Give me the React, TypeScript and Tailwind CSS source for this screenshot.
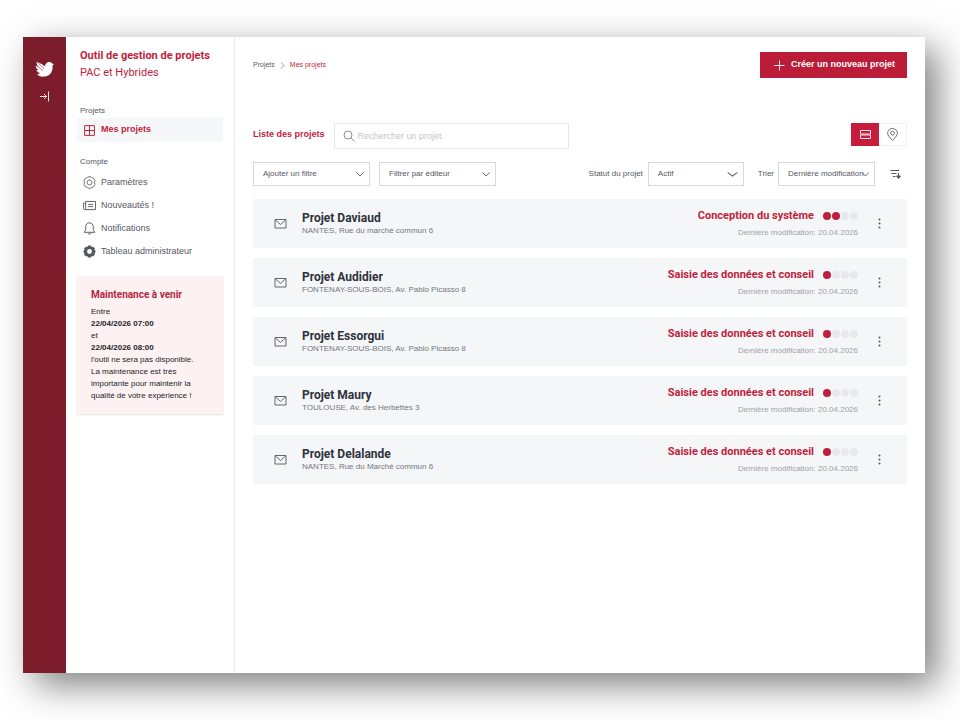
import { useState } from "react";

const projects = [
  { name: "Projet Daviaud", address: "NANTES, Rue du marché commun 6", status: "Conception du système", step: 2 },
  { name: "Projet Audidier", address: "FONTENAY-SOUS-BOIS, Av. Pablo Picasso 8", status: "Saisie des données et conseil", step: 1 },
  { name: "Projet Essorgui", address: "FONTENAY-SOUS-BOIS, Av. Pablo Picasso 8", status: "Saisie des données et conseil", step: 1 },
  { name: "Projet Maury", address: "TOULOUSE, Av. des Herbettes 3", status: "Saisie des données et conseil", step: 1 },
  { name: "Projet Delalande", address: "NANTES, Rue du Marché commun 6", status: "Saisie des données et conseil", step: 1 },
];

const accountItems = [
  {
    title: "Paramètres",
    icon: (
      <svg className="size-[13px]" viewBox="0 0 24 24" fill="none" stroke="currentColor" strokeWidth="1.5" strokeLinejoin="round">
        <path d="M9 1.500h6l1.500 1.800 2.700.5 3 5-.8 2.200v2l.8 2.200-3 5-2.700.5L15 22.500H9l-1.500-1.800-2.700-.5-3-5 .8-2.200v-2l-.8-2.200 3-5 2.700-.5z" />
        <circle cx="12" cy="12" r="4.500" />
      </svg>
    ),
  },
  {
    title: "Nouveautés !",
    icon: (
      <svg className="size-[13px]" viewBox="0 0 24 24" fill="none" stroke="currentColor" strokeWidth="1.7">
        <path d="M5 4.500h18v15H3.500A2.500 2.500 0 0 1 1 17V7.500h4M5 4.500V17a1.500 2.500 0 0 1-1.500 2.500" />
        <path d="M9.500 10h9M9.500 14h9" />
      </svg>
    ),
  },
  {
    title: "Notifications",
    icon: (
      <svg className="size-[13px]" viewBox="0 0 24 24" fill="none" stroke="currentColor" strokeWidth="1.7" strokeLinejoin="round">
        <path d="M12 1.500c-4.500 0-7 3.300-7 7.500v5.500l-3 4.500h20l-3-4.500V9c0-4.200-2.500-7.500-7-7.500z" />
        <path d="M9 19.500c.3 2 1.500 3 3 3s2.700-1 3-3" />
      </svg>
    ),
  },
  {
    title: "Tableau administrateur",
    icon: (
      <svg className="size-[13px]" viewBox="0 0 24 24" fill="currentColor">
        <path
          fillRule="evenodd"
          d="M9 1h6l.8 2.600L18.500 3 22 6.500l-.8 2.500L23 10v4l-1.800 1 .8 2.500-3.500 3.500-2.700-.6L15 23H9l-.8-2.600-2.700.6L2 17.500l.8-2.500L1 14v-4l1.800-1L2 6.500 5.500 3l2.700.6zM12 7.500a4.500 4.500 0 1 0 0 9 4.500 4.500 0 0 0 0-9z"
        />
      </svg>
    ),
  },
];

export default function App() {
  return (
    <div className="flex min-h-screen bg-white pt-[37px] pr-[35px] pb-[47px] pl-[23px] font-['Liberation_Sans',Arial,sans-serif] text-[#55585f]">
      <div className="flex flex-1 bg-white shadow-[12px_12px_34px_rgba(0,0,0,0.5)]">
        <Rail />
        <Sidebar />
        <Main />
      </div>
    </div>
  );
}

function Rail() {
  return (
    <aside className="flex w-[43px] shrink-0 flex-col items-center bg-[#7d1d2b] pt-6 text-white">
      <svg className="h-4 w-[19px]" viewBox="0 0 38 32" fill="currentColor" aria-label="Accueil">
        <path d="M3 2c5 1 11 4 17 9 0-6 4-9 8-9 3 0 5 1 6 3l4 1-3 3c1 13-5 21-16 22-7 1-12-1-15-5 3 0 5-1 6-2-4-1-6-3-7-6l4 0C4 16 2 14 1 10l5 1C4 8 3 5 3 2z" />
        <path d="M5 3l13 12M4 10l12 9" stroke="#7d1d2b" strokeWidth="1.200" fill="none" />
      </svg>
      <button type="button" aria-label="Déplier le menu" className="mt-[14px]">
        <svg className="size-[11px]" viewBox="0 0 22 22" fill="none" stroke="currentColor" strokeWidth="1.800">
          <path d="M2 11h13M10 6l5 5-5 5M19 1v20" />
        </svg>
      </button>
    </aside>
  );
}

function Sidebar() {
  return (
    <nav className="w-[169px] shrink-0 border-r border-[#ececef] px-[11px] pt-[10px]">
      <div className="pl-[3px] font-[Roboto,sans-serif] text-[11px] leading-[17px] text-[#bf1e3c]">
        <p className="font-bold">Outil de gestion de projets</p>
        <p>PAC et Hybrides</p>
      </div>

      <p className="mt-6 pl-[3px] text-[8px] leading-3">Projets</p>
      <a href="#" className="mt-[1px] flex h-6 items-center gap-[5px] bg-[#f6f7f9] pl-[6px] text-[9px] font-bold text-[#bf1e3c]">
        <svg className="size-[13px]" viewBox="0 0 24 24" fill="none" stroke="currentColor" strokeWidth="1.800">
          <path d="M3 3h18v18H3zM12 3v18M3 12h18" />
        </svg>
        Mes projets
      </a>

      <p className="mt-[14px] pl-[3px] text-[8px] leading-3">Compte</p>
      <ul className="mt-[3px]">
        {accountItems.map((item) => (
          <li key={item.title}>
            <a href="#" className="flex h-[23px] items-center gap-[5px] pl-[6px] text-[9px]">
              {item.icon}
              {item.title}
            </a>
          </li>
        ))}
      </ul>

      <section className="mt-[13px] bg-[#fdf1f2] pt-3 pr-6 pb-3 pl-[14px] text-[8px] leading-3 text-[#23252b] shadow-[0_1px_2px_rgba(0,0,0,0.12)]">
        <h2 className="mb-1 font-[Roboto,sans-serif] text-[10px] leading-[14px] font-bold text-[#b5263f]">Maintenance à venir</h2>
        <p>Entre</p>
        <p className="font-bold">22/04/2026 07:00</p>
        <p>et</p>
        <p className="font-bold">22/04/2026 08:00</p>
        <p>l'outil ne sera pas disponible. La maintenance est très importante pour maintenir la qualité de votre expérience !</p>
      </section>
    </nav>
  );
}

function Main() {
  const [search, setSearch] = useState("");

  return (
    <main className="min-w-0 flex-1 px-[18px] pt-[15px]">
      <header className="flex items-center justify-between">
        <div className="flex items-center gap-1 text-[7px]">
          <a href="#">Projets</a>
          <svg className="size-[7px]" viewBox="0 0 14 14" fill="none" stroke="#8d9098" strokeWidth="1.800">
            <path d="M4 1l6 6-6 6" />
          </svg>
          <a href="#" className="text-[#bf1e3c]">Mes projets</a>
        </div>
        <button type="button" className="flex h-[26px] items-center gap-[6px] bg-[#bb1d39] pr-3 pl-[14px] text-[9px] font-bold text-white">
          <svg className="size-[11px]" viewBox="0 0 22 22" fill="none" stroke="currentColor" strokeWidth="1.800">
            <path d="M11 1v20M1 11h20" />
          </svg>
          Créer un nouveau projet
        </button>
      </header>

      <div className="mt-[45px] flex items-start">
        <h1 className="mr-[9px] text-[9px] leading-[23px] font-bold text-[#bf1e3c]">Liste des projets</h1>
        <label className="flex h-[26px] w-[235px] items-center gap-[3px] border border-[#e6e7ea] px-2 text-[#8d9098]">
          <svg className="size-3 shrink-0" viewBox="0 0 24 24" fill="none" stroke="currentColor" strokeWidth="2">
            <circle cx="10" cy="10" r="8" />
            <path d="M16 16l7 7" />
          </svg>
          <input
            type="text"
            aria-label="Rechercher un projet"
            placeholder="Rechercher un projet"
            value={search}
            onChange={(e) => setSearch(e.target.value)}
            className="h-full w-full min-w-0 text-[9px] outline-none placeholder:text-[#c3c5ca]"
          />
        </label>
        <div className="ml-auto flex h-[23px]">
          <button type="button" aria-label="Vue liste" className="grid w-7 place-items-center bg-[#c81c3d] text-white">
            <svg className="size-[11px]" viewBox="0 0 22 22" fill="none" stroke="currentColor" strokeWidth="1.800">
              <path d="M1 3h20v7H1zM1 12h20v7H1z" />
            </svg>
          </button>
          <button type="button" aria-label="Vue carte" className="grid w-7 place-items-center border border-l-0 border-[#eff0f2]">
            <svg className="size-[13px]" viewBox="0 0 24 24" fill="none" stroke="currentColor" strokeWidth="1.600">
              <path d="M12 23C6 17 3 13 3 9.500a9 8.500 0 0 1 18 0C21 13 18 17 12 23z" />
              <circle cx="12" cy="9.500" r="3.500" />
            </svg>
          </button>
        </div>
      </div>

      <div className="mt-[13px] flex items-center text-[8px]">
        <Select label="Ajouter un filtre" className="w-[117px]" />
        <Select label="Filtrer par éditeur" className="ml-[9px] w-[117px]" />
        <label htmlFor="statut" className="mr-[5px] ml-auto">Statut du projet</label>
        <Select id="statut" label="Actif" className="w-24" wide />
        <label htmlFor="tri" className="mr-1 ml-[14px]">Trier</label>
        <Select id="tri" label="Dernière modification" className="w-[97px]" tight />
        <button type="button" aria-label="Ordre de tri" className="mr-[6px] ml-[15px]">
          <svg className="size-[11px]" viewBox="0 0 22 22" fill="none" stroke="currentColor" strokeWidth="2">
            <path d="M1 3h17M3 9h10M6 15h5M17 8v10" />
            <path d="M13 14h8l-4 5z" fill="currentColor" />
          </svg>
        </button>
      </div>

      <ul className="mt-[13px] flex flex-col gap-[10px]">
        {projects.map((project) => (
          <ProjectRow key={project.name} {...project} />
        ))}
      </ul>
    </main>
  );
}

function Select({ id, label, className, wide, tight }: { id?: string; label: string; className: string; wide?: boolean; tight?: boolean }) {
  return (
    <div className={`relative ${className}`}>
      <select
        id={id}
        aria-label={id ? undefined : label}
        className={`block h-6 w-full appearance-none border border-[#d5d8dc] bg-white pl-[9px] ${tight ? "pr-0" : "pr-4"}`}
      >
        <option>{label}</option>
      </select>
      <svg
        className={`pointer-events-none absolute top-2 right-[6px] h-2 ${wide ? "w-[11px]" : tight ? "w-[7px]" : "w-2"}`}
        viewBox="0 0 16 16"
        preserveAspectRatio="none"
        fill="none"
        stroke="currentColor"
        strokeWidth="1.800"
      >
        <path d="M1 5l7 7 7-7" />
      </svg>
    </div>
  );
}

function ProjectRow({ name, address, status, step }: { name: string; address: string; status: string; step: number }) {
  return (
    <li className="flex h-[49px] items-center bg-[#f5f6f8] pr-[22px] pl-[21px]">
      <svg className="mr-[15px] h-[13px] w-[13px]" viewBox="0 0 26 26" fill="none" stroke="currentColor" strokeWidth="1.800">
        <path d="M2 5h22v17H2zM2 5l11 10L24 5" />
      </svg>
      <div>
        <h3 className="font-[Roboto,sans-serif] text-[12px] leading-[14px] font-bold text-[#2d323b]">{name}</h3>
        <p className="text-[8px] leading-3 text-[#73767e]">{address}</p>
      </div>
      <div className="ml-auto flex flex-col items-end pt-[2px]">
        <div className="flex items-center gap-[9px]">
          <span className="font-[Roboto,sans-serif] text-[11px] leading-4 font-bold text-[#bf1e3c]">{status}</span>
          <span className="flex gap-[1px]">
            {[1, 2, 3, 4].map((n) => (
              <span key={n} className={`size-2 rounded-full ${n <= step ? "bg-[#bf1e3c]" : "bg-[#e8e9ec]"}`} />
            ))}
          </span>
        </div>
        <p className="text-[8px] leading-[18px] text-[#a0a2a9]">Dernière modification: 20.04.2026</p>
      </div>
      <button type="button" aria-label={`Options ${name}`} className="ml-4">
        <svg className="h-[11px] w-[11px]" viewBox="0 0 22 22" fill="currentColor">
          <circle cx="11" cy="3" r="2" />
          <circle cx="11" cy="11" r="2" />
          <circle cx="11" cy="19" r="2" />
        </svg>
      </button>
    </li>
  );
}
